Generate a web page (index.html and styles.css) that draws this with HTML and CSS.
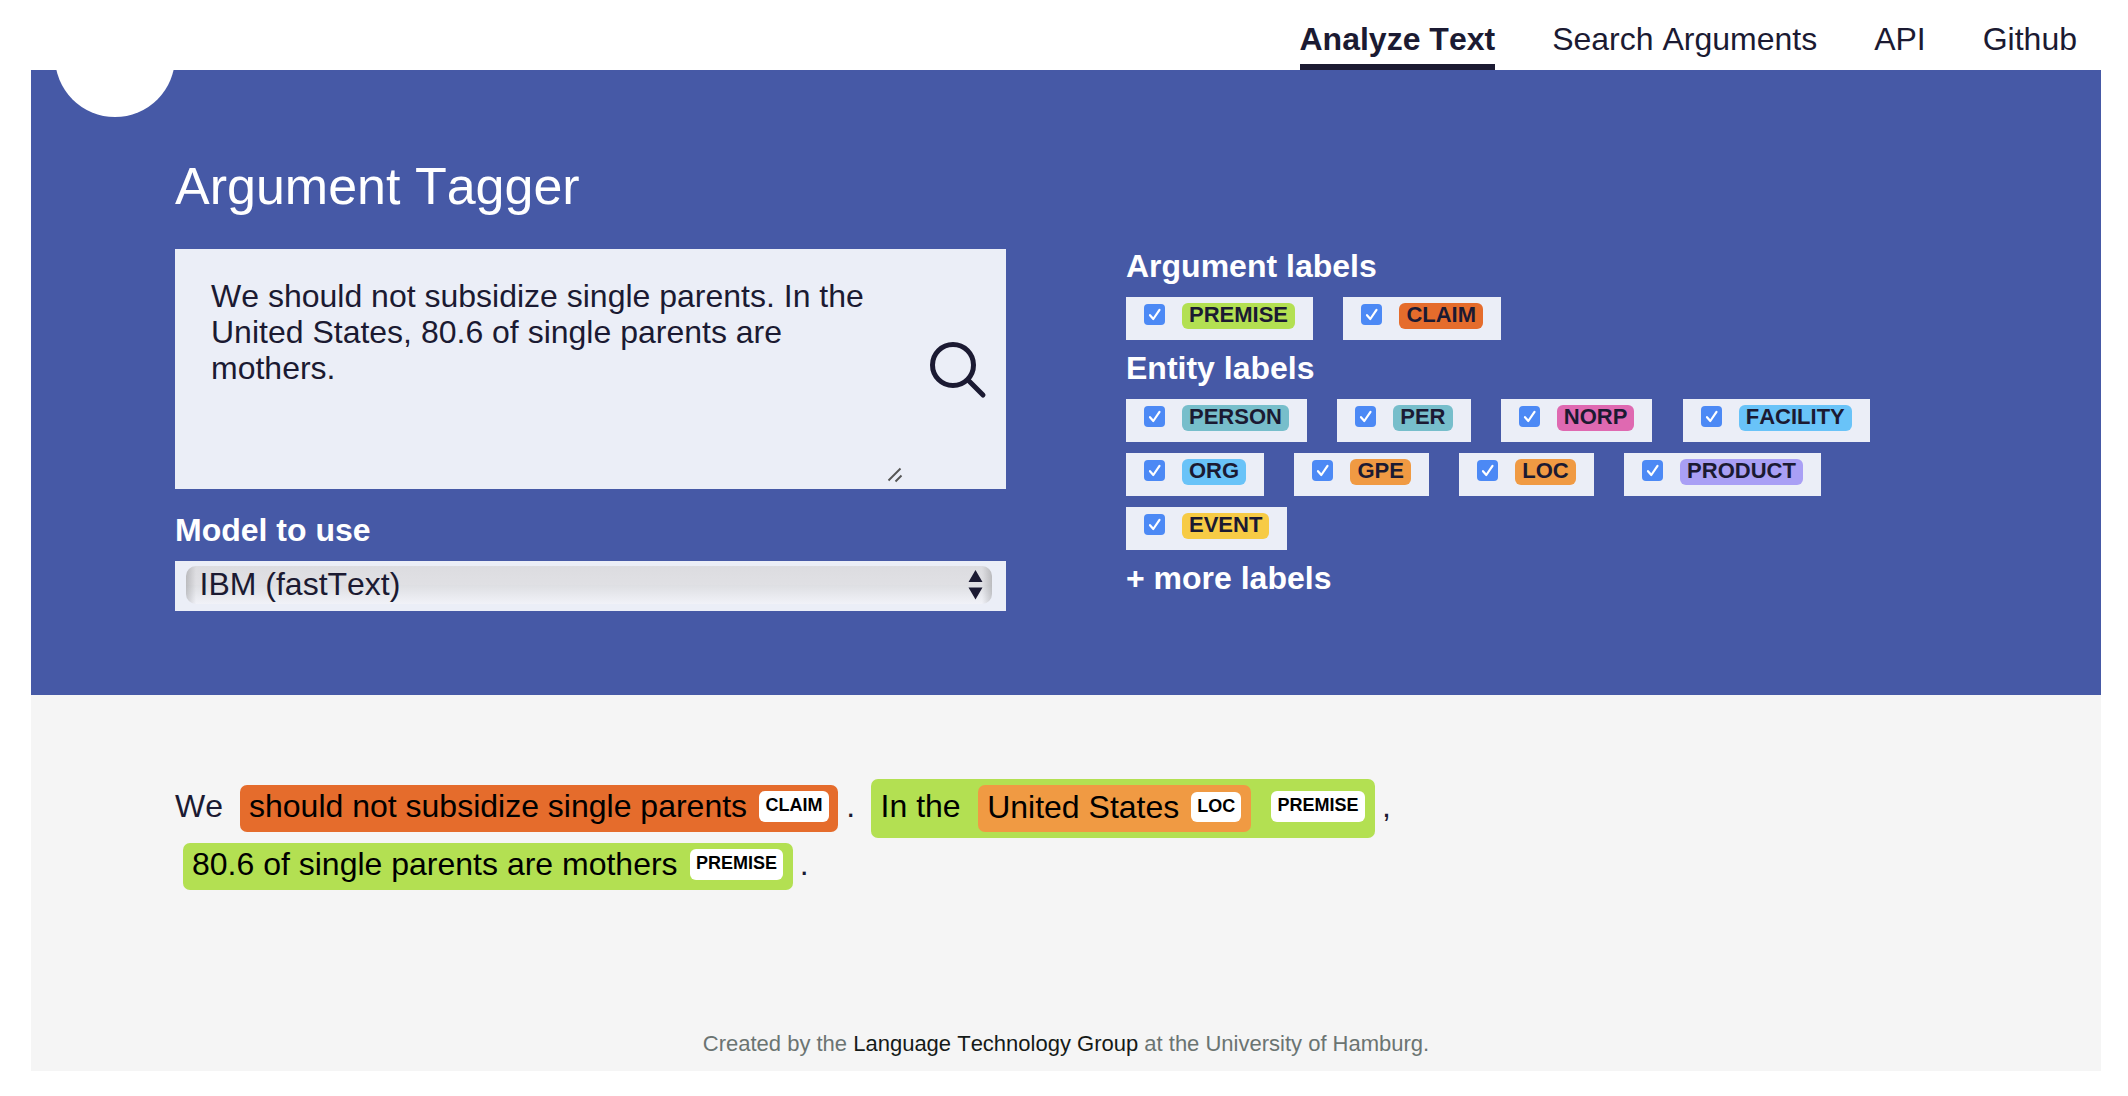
FILE: index.html
```html
<!DOCTYPE html>
<html lang="en">
<head>
<meta charset="utf-8">
<title>Argument Tagger</title>
<link rel="stylesheet" href="styles.css">
</head>
<body>
<nav class="nav">
  <a class="nav-link active">Analyze Text</a>
  <a class="nav-link">Search Arguments</a>
  <a class="nav-link">API</a>
  <a class="nav-link">Github</a>
</nav>
<header class="hero">
  <span class="logo"></span>
  <h1 class="title">Argument Tagger</h1>
  <div class="columns">
    <section class="form">
      <div class="input">
        <div class="input-text">We should not subsidize single parents. In the<br>United States, 80.6 of single parents are<br>mothers.</div>
        <svg class="grip" width="16" height="16" viewBox="0 0 16 16"><path d="M1.5 13.500 13.500 1.500M8.500 14.500 14.500 8.500"/></svg>
        <svg class="search" width="58" height="58" viewBox="0 0 58 58"><circle cx="24" cy="24" r="20.500"/><path d="M39.500 39.500 54 54"/></svg>
      </div>
      <h2 class="heading model-heading">Model to use</h2>
      <div class="select-box">
        <div class="select">
          <span>IBM (fastText)</span>
          <svg class="arrows" width="15" height="30" viewBox="0 0 15 30"><path d="M7.500 0 14.500 12H.5zM.5 17.500h14l-7 12z"/></svg>
        </div>
      </div>
    </section>
    <section class="labels">
      <h2 class="heading">Argument labels</h2>
      <div class="chips">
        <label class="chip"><svg class="check" viewBox="0 0 21 21"><path d="M6 11.200 9.300 15 15.500 5.800"/></svg><span class="tag green">PREMISE</span></label>
        <label class="chip"><svg class="check" viewBox="0 0 21 21"><path d="M6 11.200 9.300 15 15.500 5.800"/></svg><span class="tag red">CLAIM</span></label>
      </div>
      <h2 class="heading">Entity labels</h2>
      <div class="chips">
        <label class="chip"><svg class="check" viewBox="0 0 21 21"><path d="M6 11.200 9.300 15 15.500 5.800"/></svg><span class="tag teal">PERSON</span></label>
        <label class="chip"><svg class="check" viewBox="0 0 21 21"><path d="M6 11.200 9.300 15 15.500 5.800"/></svg><span class="tag teal">PER</span></label>
        <label class="chip"><svg class="check" viewBox="0 0 21 21"><path d="M6 11.200 9.300 15 15.500 5.800"/></svg><span class="tag pink">NORP</span></label>
        <label class="chip"><svg class="check" viewBox="0 0 21 21"><path d="M6 11.200 9.300 15 15.500 5.800"/></svg><span class="tag sky">FACILITY</span></label>
        <label class="chip"><svg class="check" viewBox="0 0 21 21"><path d="M6 11.200 9.300 15 15.500 5.800"/></svg><span class="tag sky">ORG</span></label>
        <label class="chip"><svg class="check" viewBox="0 0 21 21"><path d="M6 11.200 9.300 15 15.500 5.800"/></svg><span class="tag orange">GPE</span></label>
        <label class="chip"><svg class="check" viewBox="0 0 21 21"><path d="M6 11.200 9.300 15 15.500 5.800"/></svg><span class="tag orange">LOC</span></label>
        <label class="chip"><svg class="check" viewBox="0 0 21 21"><path d="M6 11.200 9.300 15 15.500 5.800"/></svg><span class="tag violet">PRODUCT</span></label>
        <label class="chip"><svg class="check" viewBox="0 0 21 21"><path d="M6 11.200 9.300 15 15.500 5.800"/></svg><span class="tag yellow">EVENT</span></label>
      </div>
      <h2 class="heading">+ more labels</h2>
    </section>
  </div>
</header>
<main class="result">
  <div class="line">
    <span class="word">We</span>
    <span class="mark red">should not subsidize single parents<b class="kind">CLAIM</b></span>
    <span class="dot">.</span>
    <span class="mark outer green">In the<span class="mark inner orange">United States<b class="kind">LOC</b></span><b class="kind">PREMISE</b></span>
    <span class="dot">,</span>
  </div>
  <div class="line second">
    <span class="mark green">80.6 of single parents are mothers<b class="kind">PREMISE</b></span>
    <span class="dot">.</span>
  </div>
  <footer class="footer">Created by the <a class="footer-link">Language Technology Group</a> at the University of Hamburg.</footer>
</main>
</body>
</html>
```
FILE: styles.css
```css
* { box-sizing: border-box; }
body {
  margin: 0;
  padding: 0 27px 0 31px;
  background: #fff;
  color: #1b1a32;
  font: 32px/36px "Liberation Sans", Arial, sans-serif;
  font-kerning: none;
}
.nav {
  display: flex;
  justify-content: flex-end;
  gap: 57px;
  height: 70px;
  padding: 21px 24px 0 0;
}
.nav-link { height: 49px; white-space: nowrap; }
.active { font-weight: bold; border-bottom: 6px solid #1b1a32; }
.hero {
  position: relative;
  height: 625px;
  padding: 86px 144px 0;
  background: #4659a6;
  color: #fff;
}
.logo {
  position: absolute;
  left: 24px;
  top: -73px;
  width: 120px;
  height: 120px;
  border-radius: 50%;
  background: #fff;
}
.title { margin: 0 0 33px; font-size: 52px; line-height: 60px; font-weight: normal; }
.columns { display: flex; gap: 120px; align-items: flex-start; }
.form { width: 831px; flex: none; }
.input {
  display: flex;
  height: 240px;
  padding: 29px 19px 5px 36px;
  background: #ebeef7;
  color: #1b1a32;
}
.input-text { width: 676px; white-space: nowrap; }
.grip { align-self: flex-end; margin-bottom: 1px; fill: none; stroke: #555; stroke-width: 1.9; }
.search {
  margin: 63px 0 0 26px;
  fill: none;
  stroke: #1b1a32;
  stroke-width: 5;
  stroke-linecap: round;
}
.heading { margin: 0; font-size: 32px; line-height: 36px; font-weight: bold; }
.model-heading { margin: 23px 0 13px; }
.select-box { height: 50px; padding: 5px 14px 0 11px; background: #ebeef7; color: #1b1a32; }
.select {
  display: flex;
  justify-content: space-between;
  height: 38px;
  padding: 0 9px 0 13.5px;
  border-radius: 10px;
  background:
    linear-gradient(90deg, rgba(0,0,0,.16), transparent 10px, transparent calc(100% - 10px), rgba(0,0,0,.16)),
    linear-gradient(#dcdce0, #e0e0e4 50%, #dedfe3 51%, #f1f2f8);
}
.arrows { margin-top: 4px; fill: #1b1a32; }
.labels { flex: 1; margin-top: -1px; }
.chips { display: flex; flex-wrap: wrap; gap: 11px 30.35px; margin: 13px 0 10px; }
.chip {
  display: flex;
  height: 43px;
  padding: 6px 18px 0;
  background: #ebeef7;
  color: #1b1a32;
}
.check {
  width: 21px;
  height: 21px;
  margin: 1px 17px 0 0;
  border-radius: 4px;
  background: #4c89f5;
  fill: none;
  stroke: #fff;
  stroke-width: 2.2;
  stroke-linecap: round;
  stroke-linejoin: round;
}
.tag {
  height: 26px;
  padding: 0 7px;
  border-radius: 6px;
  font-size: 22px;
  line-height: 24px;
  font-weight: bold;
}
.green { background: #b3e052; }
.red { background: #e56c2c; }
.teal { background: #77becb; }
.pink { background: #df69b1; }
.sky { background: #69c3f8; }
.orange { background: #f09a43; }
.violet { background: #a99ff5; }
.yellow { background: #f7cb45; }
.result {
  display: flex;
  flex-direction: column;
  height: 376px;
  padding: 84px 144px 0;
  background: #f5f5f5;
}
.line { display: flex; align-items: center; height: 59px; white-space: nowrap; }
.second { margin: 5px 0 0 8px; height: 47px; }
.word { width: 65px; padding-bottom: 5px; }
.mark {
  display: flex;
  height: 47px;
  padding: 3px 9.5px 0 9px;
  border-radius: 7px;
  color: #000;
}
.outer { height: 59px; padding: 9px 10px 0 9.5px; }
.inner { height: 47px; margin: -3px 10px 0 17px; padding: 4px 10px 0 9.5px; }
.kind {
  height: 31px;
  margin: 3px 0 0 12px;
  padding: 0 6.3px;
  border-radius: 6px;
  background: #fff;
  font-size: 18px;
  line-height: 28px;
}
.outer > .kind { margin-left: 10px; }
.inner .kind { height: 30px; padding: 0 6px; }
.dot { padding: 0 16px 5px 8px; }
.outer + .dot, .second .dot { padding-left: 7px; }
.footer {
  margin: 141px -144px 0;
  color: #6b7472;
  font-size: 22px;
  line-height: 26px;
  text-align: center;
}
.footer-link { color: #151a18; }
```
